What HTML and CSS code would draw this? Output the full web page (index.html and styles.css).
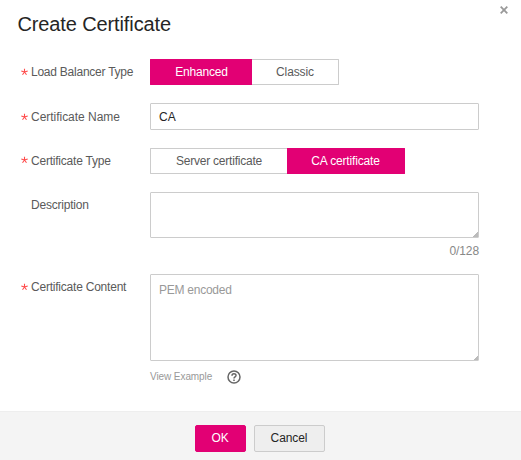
FILE: index.html
```html
<!DOCTYPE html>
<html lang="en">
<head>
<meta charset="utf-8">
<title>Create Certificate</title>
<link rel="stylesheet" href="styles.css">
</head>
<body>
<main class="dialog">
  <header class="header">
    <h1>Create Certificate</h1>
    <button class="close" aria-label="Close"><svg width="8" height="8" viewBox="0 0 8 8"><path d="M.7.7l6.6 6.6M7.3.7L.7 7.3" stroke="#999" stroke-width="1.8"/></svg></button>
  </header>
  <form class="form">
    <div class="row">
      <span class="label"><svg class="star" viewBox="0 0 8 8"><path d="M3.5 4V.8M3.5 4L.3 3M3.5 4l3.2-1M3.5 4l-2 2.8M3.5 4l2 2.8"/></svg><span class="t-load">Load Balancer Type</span></span>
      <div class="segments"><button type="button" class="seg on w-enh">Enhanced</button><button type="button" class="seg w-cls">Classic</button></div>
    </div>
    <div class="row">
      <span class="label t-name"><svg class="star" viewBox="0 0 8 8"><path d="M3.5 4V.8M3.5 4L.3 3M3.5 4l3.2-1M3.5 4l-2 2.8M3.5 4l2 2.8"/></svg><span>Certificate Name</span></span>
      <div class="field name">CA</div>
    </div>
    <div class="row type">
      <span class="label"><svg class="star" viewBox="0 0 8 8"><path d="M3.5 4V.8M3.5 4L.3 3M3.5 4l3.2-1M3.5 4l-2 2.8M3.5 4l2 2.8"/></svg><span>Certificate Type</span></span>
      <div class="segments"><button type="button" class="seg w-srv">Server certificate</button><button type="button" class="seg on w-ca">CA certificate</button></div>
    </div>
    <div class="row desc">
      <span class="label plain">Description</span>
      <div>
        <div class="field area"><i class="grip"></i></div>
        <div class="count">0/128</div>
      </div>
    </div>
    <div class="row content">
      <span class="label"><svg class="star" viewBox="0 0 8 8"><path d="M3.5 4V.8M3.5 4L.3 3M3.5 4l3.2-1M3.5 4l-2 2.8M3.5 4l2 2.8"/></svg><span>Certificate Content</span></span>
      <div>
        <div class="field area big">PEM encoded<i class="grip"></i></div>
        <div class="example"><span>View Example</span><svg width="14" height="14" viewBox="0 0 14 14" fill="none" stroke="#666"><circle cx="7" cy="7" r="6" stroke-width="1.5"/><path d="M5 5.7C5 3 9 3 9 5.5 9 7 7 6.9 7 8.6M7 9.6v1.5" stroke-width="1.5"/></svg></div>
      </div>
    </div>
  </form>
  <footer class="footer"><button class="btn ok">OK</button><button class="btn cancel">Cancel</button></footer>
</main>
</body>
</html>
```
FILE: styles.css
```css
* { box-sizing: border-box; }
body { margin: 0; background: #fff; font: 12px/16px "Liberation Sans", Arial, sans-serif; color: #5a5a5a; }
button { font: inherit; padding: 0; margin: 0; letter-spacing: -.1px; }
.dialog { width: 521px; height: 460px; display: flex; flex-direction: column; }
.header { height: 59px; display: flex; justify-content: space-between; padding: 6px 13px 0 17.5px; }
h1 { margin: 6px 0 0; font-size: 20px; line-height: 24px; font-weight: 400; color: #252525; letter-spacing: -.12px; }
.close { border: 0; background: none; width: 8px; height: 8px; }
.close svg { display: block; }
.form { flex: 1; }
.row { display: grid; grid-template-columns: 129px 329px; height: 44px; padding-left: 21px; align-items: start; }
.row.type { padding-top: 1px; }
.label { display: flex; align-items: center; height: 26px; letter-spacing: -.22px; }
.row.type .label { height: 25px; }
.t-load { letter-spacing: -.24px; }
.t-name { height: 28px; letter-spacing: -.03px; }
.plain { padding-left: 10px; }
.star { width: 8px; height: 8px; margin: -1px 2px 0 0; fill: none; stroke: #ff4c4c; stroke-width: 1.1; }
.segments { display: flex; }
.seg { height: 26px; border: 1px solid #ccc; background: #fff; color: #5a5a5a; }
.seg:first-child { border-radius: 1px 0 0 1px; border-right: 0; }
.seg:last-child { border-radius: 0 1px 1px 0; border-left: 0; }
.seg.on { background: #e20074; border-color: #e20074; color: #fff; }
.w-enh { width: 102px; letter-spacing: -.2px; }
.w-cls { width: 87px; }
.w-srv { width: 137px; letter-spacing: -.22px; }
.w-ca { width: 118px; letter-spacing: -.16px; }
.field { position: relative; border: 1px solid #ccc; border-radius: 1px; background: #fff; }
.name { height: 27px; padding: 5px 8px; color: #252525; }
.row.desc { height: 82px; padding-top: 1px; }
.row.content { height: 136px; padding-top: 1px; }
.area { height: 46px; }
.count { margin-top: 5px; text-align: right; letter-spacing: -.1px; color: #888; }
.big { height: 87px; padding: 7px 8px; color: #999; letter-spacing: -.25px; }
.grip { position: absolute; right: 0; bottom: 0; width: 5px; height: 5px; background: linear-gradient(135deg, transparent 50%, #bbb 50%); }
.example { display: flex; align-items: center; gap: 15px; margin-top: 8px; font-size: 10px; letter-spacing: -.08px; color: #999; }
.footer { height: 49px; display: flex; justify-content: center; gap: 8px; padding: 13px 2px 0 0; background: #f4f4f4; border-top: 1px solid #eee; }
.btn { height: 27px; border: 1px solid; border-radius: 2px; padding-bottom: 1px; }
.ok { width: 51px; background: #e20074; border-color: #e20074; color: #fff; }
.cancel { width: 71px; background: #eee; border-color: #ccc; color: #252525; }
```
